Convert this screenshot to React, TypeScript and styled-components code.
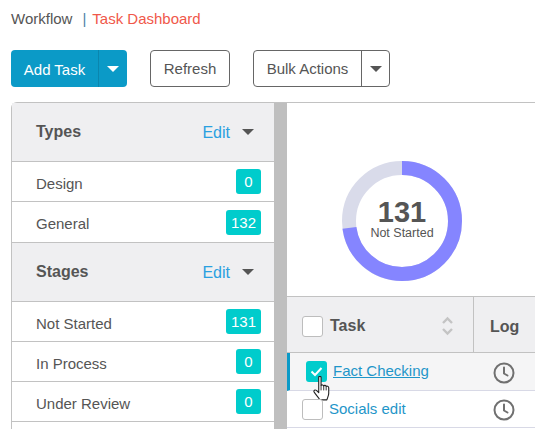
import React, { FC } from "react";
import styled, { createGlobalStyle } from "styled-components";

const GlobalStyle = createGlobalStyle`
  html, body {
    margin: 0;
    padding: 0;
    background: #fff;
    overflow: hidden;
  }
  body {
    font-family: "Liberation Sans", Arial, sans-serif;
    color: #555;
  }
`;

const Page = styled.div`
  width: 535px;
  height: 429px;
  overflow: hidden;
  padding: 10px 0 0 11px;
  box-sizing: border-box;
`;

const Breadcrumb = styled.div`
  display: flex;
  align-items: center;
  height: 17px;
  font-size: 15px;
  line-height: 17px;
  color: #555;
`;

const Separator = styled.span`
  color: #4a7fa8;
  margin: 0 6px 0 10px;
`;

const Current = styled.span`
  color: #f0584a;
`;

const Toolbar = styled.div`
  display: flex;
  align-items: stretch;
  height: 37px;
  margin-top: 23px;
`;

const SplitPrimary = styled.div`
  display: flex;
  width: 116px;
  background: #0b9ac7;
  border-radius: 4px;
  color: #fff;
  font-size: 15px;
`;

const PrimaryLabel = styled.div`
  width: 88px;
  flex: none;
  display: flex;
  align-items: center;
  justify-content: center;
  border-right: 1px solid #0a86ae;
  padding-top: 1px;
  box-sizing: border-box;
`;

const CaretCell = styled.div`
  flex: 1;
  display: flex;
  align-items: center;
  justify-content: center;
`;

const Caret = styled.span<{ $color: string; $w?: number }>`
  display: block;
  width: 0;
  height: 0;
  border-left: ${(p) => p.$w ?? 6}px solid transparent;
  border-right: ${(p) => p.$w ?? 6}px solid transparent;
  border-top: 6px solid ${(p) => p.$color};
`;

const OutlineButton = styled.div`
  width: 80px;
  margin-left: 23px;
  border: 1px solid #666;
  border-radius: 4px;
  box-sizing: border-box;
  display: flex;
  align-items: center;
  justify-content: center;
  font-size: 15px;
  color: #555;
`;

const SplitOutline = styled.div`
  display: flex;
  width: 137px;
  margin-left: 23px;
  border: 1px solid #666;
  border-radius: 4px;
  box-sizing: border-box;
  font-size: 15px;
  color: #555;
`;

const SplitOutlineLabel = styled.div`
  width: 108px;
  flex: none;
  box-sizing: border-box;
  border-right: 1px solid #666;
  display: flex;
  align-items: center;
  justify-content: center;
`;

const Panel = styled.div`
  display: flex;
  margin-top: 15px;
  width: 560px;
  height: 340px;
  border-top: 1px solid #c2c2c2;
  border-left: 1px solid #c2c2c2;
  border-top-left-radius: 6px;
  box-sizing: border-box;
`;

const Sidebar = styled.div`
  width: 262px;
  flex: none;
`;

const Divider = styled.div`
  width: 13px;
  flex: none;
  background: #bfbfbf;
`;

const SectionHead = styled.div`
  height: 59px;
  box-sizing: border-box;
  background: #efeff1;
  border-bottom: 1px solid #c2c2c2;
  display: flex;
  align-items: flex-start;
  padding: 20px 20px 0 24px;
`;

const SectionTitle = styled.div`
  flex: 1;
  font-size: 16px;
  line-height: 18px;
  font-weight: 700;
  color: #555;
`;

const EditLink = styled.span`
  font-size: 16px;
  line-height: 20px;
  color: #2aa0e0;
  margin-right: 12px;
`;

const CaretWrap = styled.span`
  padding-top: 6px;
`;

const Row = styled.div<{ $tall?: boolean }>`
  height: ${(p) => (p.$tall ? 41 : 40)}px;
  box-sizing: border-box;
  border-bottom: 1px solid #c2c2c2;
  display: flex;
  align-items: center;
  justify-content: space-between;
  padding: 0 13px 0 24px;
  font-size: 15px;
  color: #555;
`;

const RowLabel = styled.span`
  padding-top: 3px;
`;

const Badge = styled.span`
  min-width: 25px;
  height: 25px;
  padding: 0 5px;
  box-sizing: border-box;
  border-radius: 3px;
  background: #00cccc;
  color: #fff;
  font-size: 15px;
  display: flex;
  align-items: center;
  justify-content: center;
`;

const Main = styled.div`
  flex: 1;
  min-width: 0;
`;

const ChartArea = styled.div`
  height: 193px;
  box-sizing: border-box;
  padding: 58px 0 0 55px;
`;

const Donut = styled.div`
  position: relative;
  width: 120px;
  height: 120px;
`;

const DonutText = styled.div`
  position: absolute;
  inset: 0;
  display: flex;
  flex-direction: column;
  align-items: center;
  justify-content: center;
  gap: 2px;
  padding-bottom: 2px;
  box-sizing: border-box;
`;

const DonutValue = styled.div`
  font-size: 29px;
  line-height: 24px;
  font-weight: 700;
  color: #555;
`;

const DonutLabel = styled.div`
  font-size: 12.5px;
  line-height: 14px;
  color: #555;
`;

const TableHead = styled.div`
  display: flex;
  height: 57px;
  box-sizing: border-box;
  background: #efeff1;
  border-top: 1px solid #c2c2c2;
  border-bottom: 1px solid #c2c2c2;
`;

const TaskHead = styled.div`
  width: 187px;
  flex: none;
  box-sizing: border-box;
  border-right: 1px solid #c2c2c2;
  display: flex;
  align-items: center;
  padding: 4px 19px 0 15px;
`;

const HeadLabel = styled.span`
  font-size: 16px;
  font-weight: 700;
  color: #555;
`;

const TaskHeadLabel = styled(HeadLabel)`
  flex: 1;
  margin: -2px 0 0 7px;
`;

const LogHead = styled.div`
  flex: 1;
  display: flex;
  align-items: center;
  padding: 4px 0 0 16px;
`;

const CheckBox = styled.span<{ $checked?: boolean }>`
  width: 21px;
  height: 21px;
  flex: none;
  box-sizing: border-box;
  border-radius: 3px;
  background: ${(p) => (p.$checked ? "#00cccc" : "#fff")};
  border: ${(p) => (p.$checked ? "none" : "1px solid #bdbdbd")};
  display: flex;
  align-items: center;
  justify-content: center;
`;

const TableRow = styled.div<{ $active?: boolean; $h: number }>`
  display: flex;
  height: ${(p) => p.$h}px;
  box-sizing: border-box;
  background: ${(p) => (p.$active ? "#f5f5f6" : "#fff")};
  border-bottom: 1px solid #d8d9e6;
  border-left: ${(p) => (p.$active ? "3px solid #0b9ac7" : "none")};
`;

const TaskCell = styled.div<{ $active?: boolean }>`
  width: ${(p) => (p.$active ? 184 : 187)}px;
  flex: none;
  position: relative;
  display: flex;
  align-items: center;
  gap: 6px;
  padding-left: ${(p) => (p.$active ? 16 : 15)}px;
  box-sizing: border-box;
`;

const TaskLink = styled.a<{ $active?: boolean }>`
  font-size: 15px;
  color: #1f96c9;
  text-decoration: ${(p) => (p.$active ? "underline" : "none")};
  margin-top: -2px;
`;

const LogCell = styled.div`
  flex: 1;
  display: flex;
  align-items: center;
  padding: 2px 0 0 19px;
  box-sizing: border-box;
`;

const HandCursor = styled.svg`
  position: absolute;
  left: 22px;
  top: 23px;
  width: 19px;
  height: 25px;
`;

const Clock: FC = () => (
  <svg width="22" height="22" viewBox="0 0 22 22" fill="none" stroke="#707070" strokeWidth="2">
    <circle cx="11" cy="11" r="9.5" />
    <path d="M11 5.5V11.5L14.5 13.5" strokeLinecap="round" strokeLinejoin="round" />
  </svg>
);

const SorterIcon = styled.svg`
  margin-top: -2px;
`;

const Sorter: FC = () => (
  <SorterIcon width="13" height="20" viewBox="0 0 13 20" fill="none" stroke="#c4c4c4" strokeWidth="2.4">
    <path d="M2 7L6.5 2.5L11 7" />
    <path d="M2 13L6.5 17.5L11 13" />
  </SorterIcon>
);

type Item = { label: string; count: number };

type SectionProps = { title: string; items: Item[]; tallLast?: boolean };

const Section: FC<SectionProps> = ({ title, items, tallLast }) => (
  <>
    <SectionHead>
      <SectionTitle>{title}</SectionTitle>
      <EditLink>Edit</EditLink>
      <CaretWrap>
        <Caret $color="#555" />
      </CaretWrap>
    </SectionHead>
    {items.map((item, i) => (
      <Row key={item.label} $tall={tallLast && i === items.length - 1}>
        <RowLabel>{item.label}</RowLabel>
        <Badge>{item.count}</Badge>
      </Row>
    ))}
  </>
);

const types: Item[] = [
  { label: "Design", count: 0 },
  { label: "General", count: 132 },
];

const stages: Item[] = [
  { label: "Not Started", count: 131 },
  { label: "In Process", count: 0 },
  { label: "Under Review", count: 0 },
];

const R = 53;
const CIRC = 2 * Math.PI * R;
const DONE = 0.728;

export default function App() {
  return (
    <Page>
      <GlobalStyle />
      <Breadcrumb>
        <span>Workflow</span>
        <Separator>|</Separator>
        <Current>Task Dashboard</Current>
      </Breadcrumb>
      <Toolbar>
        <SplitPrimary>
          <PrimaryLabel>Add Task</PrimaryLabel>
          <CaretCell>
            <Caret $color="#fff" />
          </CaretCell>
        </SplitPrimary>
        <OutlineButton>Refresh</OutlineButton>
        <SplitOutline>
          <SplitOutlineLabel>Bulk Actions</SplitOutlineLabel>
          <CaretCell>
            <Caret $color="#555" />
          </CaretCell>
        </SplitOutline>
      </Toolbar>
      <Panel>
        <Sidebar>
          <Section title="Types" items={types} tallLast />
          <Section title="Stages" items={stages} />
        </Sidebar>
        <Divider />
        <Main>
          <ChartArea>
            <Donut>
              <svg width="120" height="120" viewBox="0 0 120 120">
                <circle cx="60" cy="60" r={R} fill="none" stroke="#d9dbea" strokeWidth="14" />
                <circle
                  cx="60"
                  cy="60"
                  r={R}
                  fill="none"
                  stroke="#8585ff"
                  strokeWidth="14"
                  strokeDasharray={`${CIRC * DONE} ${CIRC}`}
                  transform="rotate(-90 60 60)"
                />
              </svg>
              <DonutText>
                <DonutValue>131</DonutValue>
                <DonutLabel>Not Started</DonutLabel>
              </DonutText>
            </Donut>
          </ChartArea>
          <TableHead>
            <TaskHead>
              <CheckBox />
              <TaskHeadLabel>Task</TaskHeadLabel>
              <Sorter />
            </TaskHead>
            <LogHead>
              <HeadLabel>Log</HeadLabel>
            </LogHead>
          </TableHead>
          <TableRow $active $h={38}>
            <TaskCell $active>
              <CheckBox $checked>
                <svg width="13" height="11" viewBox="0 0 13 11" fill="none" stroke="#fff" strokeWidth="2">
                  <path d="M1.5 5.5L5 9L11.5 2" />
                </svg>
              </CheckBox>
              <TaskLink $active>Fact Checking</TaskLink>
              <HandCursor viewBox="0.5 1 15 22.5">
                <path
                  d="M5.5 2.2C5.5 1 7.6 1 7.6 2.2V9.6C8 8.8 9.8 8.8 10 9.9C10.4 9.2 12 9.3 12.2 10.4C12.7 9.9 14.4 10 14.5 11.5V16.5C14.5 19 13.4 20.5 12.8 22.5H6.5C5.6 20.4 3.4 18.6 1.4 15.5C0.6 14 2.2 13 3.4 14L5.5 16Z"
                  fill="#fff"
                  stroke="#222"
                  strokeWidth="1"
                  strokeLinejoin="round"
                />
                <path d="M7.6 9.6V14M10 9.9V14M12.2 10.4V14" stroke="#222" strokeWidth="0.8" fill="none" />
              </HandCursor>
            </TaskCell>
            <LogCell>
              <Clock />
            </LogCell>
          </TableRow>
          <TableRow $h={37}>
            <TaskCell>
              <CheckBox />
              <TaskLink>Socials edit</TaskLink>
            </TaskCell>
            <LogCell>
              <Clock />
            </LogCell>
          </TableRow>
        </Main>
      </Panel>
    </Page>
  );
}
